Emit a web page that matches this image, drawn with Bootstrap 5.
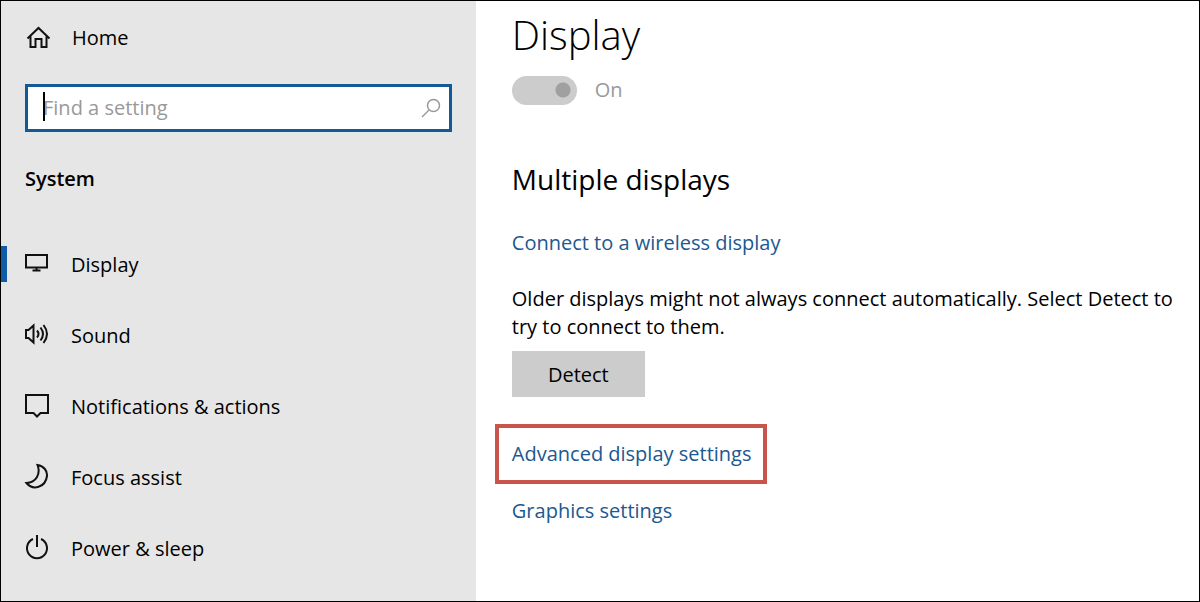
<!DOCTYPE html>
<html lang="en">
<head>
<meta charset="utf-8">
<meta name="viewport" content="width=device-width, initial-scale=1">
<title>Settings</title>
<link href="https://cdn.jsdelivr.net/npm/bootstrap@5.3.0/dist/css/bootstrap.min.css" rel="stylesheet">
<style>
  body { font-family: "Open Sans", "Noto Sans", sans-serif; font-size: 20px; line-height: 28px; color: #000; background: #fff; }
  .settings-window { display: grid; grid-template-columns: 65fr 99fr; border: 1px solid #000; }
  .settings-side { background: #e6e6e6; padding: 23px 24px 16px; }
  .home-link { gap: 21px; padding-left: 1px; color: #000; }
  .find-box { margin-top: 32px; height: 48px; border: 3px solid #135995; background: #fff; }
  .find-box input { font-size: 20px; line-height: 28px; padding: 0 0 0 15px; color: #111; caret-color: #000; }
  .find-box input::placeholder { color: #999; opacity: 1; }
  .caret-bar { left: 15px; top: 5px; width: 2px; height: 29px; background: #000; }
  .side-title { font-size: 20px; line-height: 28px; font-weight: 600; margin: 33px 0 36px; color: #000; }
  .side-list { margin: 0 -24px; }
  .side-item { height: 71px; padding-left: 22px; gap: 22px; color: #000; border-radius: 0; }
  .side-item.current::before { content: ""; position: absolute; left: 0; top: 17px; width: 6px; height: 36px; background: #0f5ba5; }
  .side-item svg { margin-bottom: 4px; }
  .icon-line { fill: none; stroke: #111; stroke-width: 2; flex: none; }
  .settings-main { padding: 4px 24px 24px 36px; }
  .page-title { font-size: 40px; line-height: 60px; font-weight: 350; color: #000; margin: 0 0 10px; }
  .switch-row { gap: 18px; min-height: 30px; padding-left: 0; color: #999; }
  .form-switch .form-check-input.on-toggle { width: 65px; height: 29px; margin: 0; border: 0; opacity: 1; background-color: #ccc;
    background-image: radial-gradient(circle at 51px 14px, #a0a0a0 7px, transparent 8px); background-position: 0 0; }
  .form-switch .form-check-label.on-label { opacity: 1; }
  .section-title { font-size: 28px; line-height: 40px; font-weight: 400; color: #000; margin: 54px 0 30px; }
  .action-link { color: #20588f; text-decoration: none; }
  .detect-btn { width: 133px; height: 46px; margin-top: 10px; padding: 2px 0 0; border: 0; border-radius: 0; background: #ccc; font-size: 20px; color: #000; }
  .marked-link { margin: 27px 0 13px -17px; padding: 12px 12px 12px 13px; border: 4px solid #c9544c; }
</style>
</head>
<body>
<div class="settings-window min-vh-100">
  <aside class="settings-side">
    <a href="#" class="home-link d-flex align-items-center text-decoration-none">
      <svg class="icon-line" width="25" height="24" viewBox="0 0 25 24"><path d="M1.500 12.500 12.500 2l11 10.500M4.500 10.500V21h5v-8h6v8h5V10.500"/></svg>
      <span>Home</span>
    </a>
    <div class="find-box position-relative d-flex align-items-center">
      <input type="text" class="form-control border-0 shadow-none bg-transparent" placeholder="Find a setting" aria-label="Find a setting">
      <span class="caret-bar position-absolute"></span>
      <svg class="me-2 flex-shrink-0" width="20" height="20" viewBox="0 0 20 20" fill="none" stroke="#999" stroke-width="1.500"><circle cx="12.500" cy="7.500" r="6"/><path d="M8 12 1 19"/></svg>
    </div>
    <h2 class="side-title">System</h2>
    <nav class="side-list nav flex-column flex-nowrap">
      <a href="#" class="side-item current position-relative d-flex align-items-center text-decoration-none">
        <svg class="icon-line" width="26" height="26" viewBox="0 0 26 26"><path d="M3 5h21v12.500H3zM13.500 18v3M9.500 20.500h8"/></svg>
        <span>Display</span>
      </a>
      <a href="#" class="side-item d-flex align-items-center text-decoration-none">
        <svg class="icon-line" width="26" height="26" viewBox="0 0 26 26"><path d="M3 9h2.500l5-4.500v17l-5-4.500H3zM14 9.500q3 3.500 0 7M17.500 6.500q5 6.500 0 13M20.500 4q7 9 0 18"/></svg>
        <span>Sound</span>
      </a>
      <a href="#" class="side-item d-flex align-items-center text-decoration-none">
        <svg class="icon-line" width="26" height="26" viewBox="0 0 26 26"><path d="M3 3h22v18h-7.500l-3.500 3.500-3.500-3.500H3z"/></svg>
        <span>Notifications &amp; actions</span>
      </a>
      <a href="#" class="side-item d-flex align-items-center text-decoration-none">
        <svg class="icon-line" width="26" height="26" viewBox="0 0 26 26"><path d="M14.500 2C21 3 24.500 8 24 13 22.500 24.500 10 28 3.500 20 13 19.500 18 11 14.500 2z"/></svg>
        <span>Focus assist</span>
      </a>
      <a href="#" class="side-item d-flex align-items-center text-decoration-none">
        <svg class="icon-line" width="26" height="26" viewBox="0 0 26 26"><path d="M14 1v12M10 5a10 10 0 1 0 8 0"/></svg>
        <span>Power &amp; sleep</span>
      </a>
    </nav>
  </aside>
  <main class="settings-main">
    <h1 class="page-title">Display</h1>
    <div class="switch-row form-check form-switch d-flex align-items-center mb-0">
      <input class="form-check-input on-toggle" type="checkbox" role="switch" id="hdr" checked disabled>
      <label class="form-check-label on-label" for="hdr">On</label>
    </div>
    <h2 class="section-title">Multiple displays</h2>
    <div><a href="#" class="action-link">Connect to a wireless display</a></div>
    <p class="mb-0 mt-4 pt-1">Older displays might not always connect automatically. Select Detect to try to connect to them.</p>
    <button type="button" class="btn detect-btn d-block">Detect</button>
    <div><a href="#" class="action-link marked-link d-inline-block">Advanced display settings</a></div>
    <div><a href="#" class="action-link">Graphics settings</a></div>
  </main>
</div>
<script src="https://cdn.jsdelivr.net/npm/bootstrap@5.3.0/dist/js/bootstrap.bundle.min.js"></script>
</body>
</html>
